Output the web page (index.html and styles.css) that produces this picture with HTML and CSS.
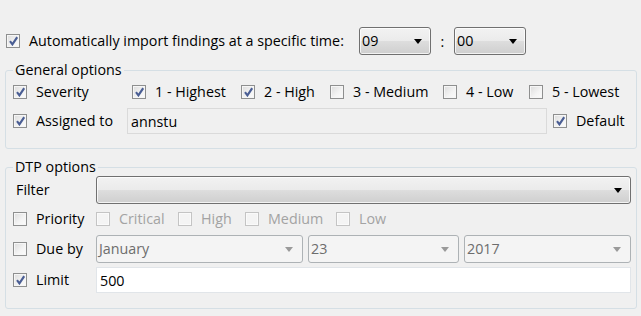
FILE: index.html
```html
<!DOCTYPE html>
<html>
<head>
<meta charset="utf-8">
<link rel="stylesheet" href="styles.css">
</head>
<body>
<div class="page">
  <div class="top-row">
    <span class="cb checked"></span>
    <span class="label top-label">Automatically import findings at a specific time:</span>
    <div class="combo btn small"><span class="val">09</span><span class="arrow"></span></div>
    <span class="colon">:</span>
    <div class="combo btn small"><span class="val">00</span><span class="arrow"></span></div>
  </div>

  <fieldset class="group general">
    <legend>General options</legend>
    <div class="sev-row">
      <div class="item w-sev"><span class="cb checked"></span><span class="label">Severity</span></div>
      <div class="item w-1"><span class="cb checked"></span><span class="label">1 - Highest</span></div>
      <div class="item w-2"><span class="cb checked"></span><span class="label">2 - High</span></div>
      <div class="item w-3"><span class="cb"></span><span class="label">3 - Medium</span></div>
      <div class="item w-4"><span class="cb"></span><span class="label">4 - Low</span></div>
      <div class="item"><span class="cb"></span><span class="label">5 - Lowest</span></div>
    </div>
    <div class="assign-row">
      <div class="item w-sev"><span class="cb checked"></span><span class="label">Assigned to</span></div>
      <div class="field ro">annstu</div>
      <div class="item def"><span class="cb checked"></span><span class="label">Default</span></div>
    </div>
  </fieldset>

  <fieldset class="group dtp">
    <legend>DTP options</legend>
    <div class="row filter-row">
      <span class="label plain w-lab2">Filter</span>
      <div class="combo btn grow"><span class="val"></span><span class="arrow"></span></div>
    </div>
    <div class="row prio-row">
      <div class="item w-lab"><span class="cb"></span><span class="label">Priority</span></div>
      <div class="item p-1 dis"><span class="cb"></span><span class="label">Critical</span></div>
      <div class="item p-2 dis"><span class="cb"></span><span class="label">High</span></div>
      <div class="item p-3 dis"><span class="cb"></span><span class="label">Medium</span></div>
      <div class="item dis"><span class="cb"></span><span class="label">Low</span></div>
    </div>
    <div class="row due-row">
      <div class="item w-lab"><span class="cb"></span><span class="label">Due by</span></div>
      <div class="combo disabled d-month"><span class="val">January</span><span class="arrow"></span></div>
      <div class="combo disabled d-day"><span class="val">23</span><span class="arrow"></span></div>
      <div class="combo disabled d-year"><span class="val">2017</span><span class="arrow"></span></div>
    </div>
    <div class="row limit-row">
      <div class="item w-lab"><span class="cb checked"></span><span class="label">Limit</span></div>
      <div class="field white grow">500</div>
    </div>
  </fieldset>
</div>
</body>
</html>
```

FILE: styles.css
```css
* { box-sizing: border-box; }
html, body { margin: 0; padding: 0; }
body {
  background: #f0f0f0;
  width: 641px;
  height: 316px;
  overflow: hidden;
  font-family: "Open Sans", "Noto Sans", sans-serif;
  font-size: 14.3px;
  color: #000;
}
.page { padding-top: 27px; }

.top-row {
  display: flex;
  align-items: center;
  height: 28px;
  padding-left: 6px;
}
.top-label { width: 330px; }
.colon { width: 23px; text-align: center; }

.cb {
  display: inline-block;
  flex: none;
  width: 14px;
  height: 14px;
  border: 1px solid #8e8f8f;
  background: linear-gradient(135deg, #dcdcdc 0%, #f4f4f4 60%, #fbfbfb 100%);
  box-shadow: inset 0 0 0 1px #f6f6f6;
  position: relative;
}
.cb.checked::after {
  content: "";
  position: absolute;
  left: 2px;
  top: 1px;
  width: 9px;
  height: 10px;
  background: url("data:image/svg+xml;utf8,<svg xmlns='http://www.w3.org/2000/svg' width='9' height='10' viewBox='0 0 9 10'><path d='M1 5.2 L3.4 8.4 L8.2 1.2' fill='none' stroke='%234a5e94' stroke-width='2.1' stroke-linejoin='miter'/></svg>") no-repeat;
}
.label { margin-left: 9px; white-space: nowrap; line-height: 18px; }
.label.plain { margin-left: 3px; }

.combo {
  display: flex;
  align-items: center;
  height: 28px;
  border: 1px solid #707070;
  border-radius: 3px;
  padding: 0 8px 0 2px;
  position: relative;
}
.combo .val { flex: 1; line-height: 18px; }
.combo .arrow {
  width: 0; height: 0;
  border-left: 4px solid transparent;
  border-right: 4px solid transparent;
  border-top: 5px solid #000;
  flex: none;
}
.combo.btn {
  background: linear-gradient(#f2f2f2 0%, #ebebeb 48%, #dddddd 52%, #cfcfcf 100%);
  box-shadow: inset 0 0 0 1px rgba(255,255,255,0.75);
}
.combo.small { width: 72px; }
.combo.disabled {
  background: #f4f4f4;
  border-color: #adb2b5;
  color: #6d6d6d;
  padding-right: 9px;
}
.combo.disabled .arrow { border-top-color: #9a9a9a; }

.group {
  margin: 6px 4px 0 5px;
  border: 1px solid #d5dfe5;
  border-radius: 3px;
  padding: 0 5px 0 7px;
  min-width: 0;
}
.group legend {
  padding: 0 2px;
  line-height: 18px;
  font-size: 14.3px;
}
.general { padding-bottom: 14px; }
.dtp { margin-top: 9px; padding-bottom: 15px; }

.item { display: flex; align-items: center; flex: none; }
.sev-row { display: flex; align-items: center; height: 22px; margin-top: 2px; }
.w-sev { width: 119px; }
.w-1 { width: 109px; }
.w-2 { width: 89px; }
.w-3 { width: 113px; }
.w-4 { width: 86px; }
.assign-row { display: flex; align-items: center; height: 26px; margin-top: 5px; }
.assign-row .w-sev { width: 114px; }
.field {
  height: 26px;
  display: flex;
  align-items: center;
  padding-left: 3px;
  border: 1px solid #e3e3e3;
}
.field.ro { width: 420px; background: #f0f0f0; border-color: #dadada; }
.def { margin-left: 6px; }
.field.white { background: #fff; border-color: #e1e5e9; }

.row { display: flex; align-items: center; }
.w-lab { width: 83px; flex: none; }
.w-lab2 { width: 80px; flex: none; }
.grow { flex: 1; }
.filter-row { height: 28px; }
.prio-row { height: 24px; margin-top: 3px; }
.p-1 { width: 82px; }
.p-2 { width: 67px; }
.p-3 { width: 91px; }
.dis .cb { border-color: #c4c4c4; background: #f4f4f4; box-shadow: inset 0 0 0 1px #fafafa; }
.dis .label { color: #a3a3a3; }
.due-row { height: 28px; margin-top: 4px; }
.d-month { width: 207px; }
.d-day { width: 151px; margin-left: 5px; }
.d-year { width: 167px; margin-left: 5px; }
.limit-row { height: 26px; margin-top: 4px; }
```
